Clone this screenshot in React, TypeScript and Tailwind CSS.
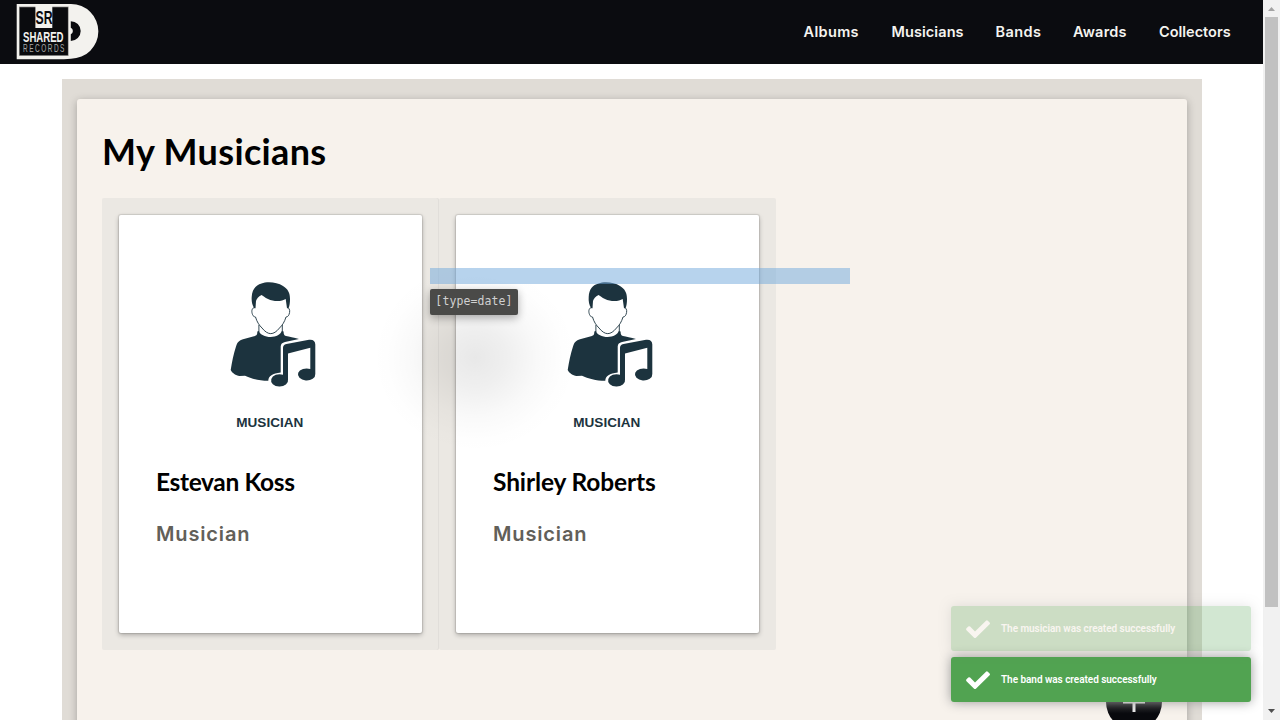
function Logo() {
  return (
    <svg width="83" height="56" viewBox="0 0 83 56" className="block">
      <path d="M.7 0H55A27.300 27.300 0 0 1 55 54.700L48 55.300H.7Z" fill="#f3f2ee" />
      <rect x="3" y="2.600" width="49.600" height="49.300" fill="#8e8e8c" />
      <rect x="3.700" y="3.300" width="48.200" height="47.900" fill="#0a0b0e" />
      <rect x="19.400" y="0" width="16.900" height="24" fill="#f3f2ee" />
      <path d="M54.800 17.200A9.900 9.900 0 0 1 54.800 37V30.200A3.500 3.500 0 0 0 54.800 23.800Z" fill="#0a0b0e" />
      <text x="19.600" y="20" textLength="17" lengthAdjust="spacingAndGlyphs" fontFamily="Liberation Sans" fontWeight="700" fontSize="19" fill="#0a0b0e">SR</text>
      <text x="7" y="37.800" textLength="40.500" lengthAdjust="spacingAndGlyphs" fontFamily="Liberation Sans" fontWeight="700" fontSize="15.500" fill="#f3f2ee">SHARED</text>
      <text transform="translate(7 48.400) scale(.6 1)" textLength="69" lengthAdjust="spacing" fontFamily="Liberation Sans" fontSize="10.800" fill="#a9a9a7">RECORDS</text>
    </svg>
  );
}

function MusicianArt() {
  return (
    <svg width="303" height="232" viewBox="0 0 303 232" className="block">
      <g fill="#1c333e">
        <path d="M135.300 93.300C133 90 132.400 86 132.700 82C133 74 137 70 142.500 68.500C148 66.500 158 67 164 71C169 74 171 78 171 84C171 88 170.500 91 169.500 93.300H168L166.700 84C163 86.500 155 87 149 84C146 82.500 144 81 142.500 80C139.500 81.500 137.500 84 137 86L136.500 93.300Z" />
        <path d="M138.300 116.500C138.300 119.500 138 120.500 135 121.200L124 124.300C120 125.600 118.500 127 117 131.500C114.500 139 113 147 111.700 155C113 158 117 160.500 120.500 161L126 160.700C132 163.500 140 165.800 149.300 165.800C149.500 161 153.500 158.300 161.700 157.500V131.500C162 128.800 163 127.800 166 127L180 124C175 122.500 170 121.600 167 121C165 120.500 164.600 119 164.600 116.500L162.800 116C162 119 157 122 151.700 122C146 122 141 119.500 139.800 116Z" />
        <path d="M164 134C164 130.500 165 129.600 167.500 129L190 124.800C194 124.300 196.300 126 196.300 129.500V159A8.700 6 0 1 1 191.300 154V132.700L169 138.500V164.500A8.500 6.200 0 1 1 164 159.700Z" />
      </g>
      <path d="M135 92.500C132.300 94 132.600 97 133.500 99.500C134.200 101.500 135.300 101.700 136.500 102C138 107 140 110 143 113C149 120.500 154.500 120.500 160.500 113C163.500 110 165.500 107 167 102C168.200 101.700 169.300 101.500 170 99.500C171 97 171.200 94 168.800 92.500M139.900 110V117.500M163.300 110V117.500" fill="none" stroke="#1c333e" strokeWidth=".9" />
      <text x="117.300" y="212" textLength="67" lengthAdjust="spacingAndGlyphs" fontFamily="Liberation Sans" fontWeight="700" fontSize="13.600" fill="#1c333e">MUSICIAN</text>
    </svg>
  );
}

function Card({ name, nameClass }: { name: string; nameClass: string }) {
  return (
    <div className="h-[452px] w-[337px] rounded-[2px] bg-[#ebe8e3] p-4 pt-[17px] shadow-[inset_-1px_0_0_#e1deda] last:shadow-none">
      <article className="ml-px h-[418px] w-[303px] rounded-[2px] bg-white shadow-[0_0_1px_1px_#0000001a,0_2px_5px_#00000045]">
        <MusicianArt />
        <div className="px-[37px] pt-[15px]">
          <h2 className={`h-10 whitespace-nowrap font-['Lato'] text-[24.500px] font-bold leading-10 text-black ${nameClass}`}>{name}</h2>
          <p className="mt-4 font-['Inter'] text-[20px] font-semibold leading-8 tracking-[0.850px] text-[#626059]">Musician</p>
        </div>
      </article>
    </div>
  );
}

function Toast({ text, className }: { text: string; className: string }) {
  return (
    <div className={`flex h-[45px] w-[300px] items-center rounded-[3px] bg-[#51a351] pl-[15px] shadow-[0_0_12px_#999999] ${className}`}>
      <svg width="24" height="24" viewBox="0 0 24 24">
        <path d="M.5 13.200Q-.3 12.200.5 11.300L2.300 9.500Q3.200 8.900 4.100 9.600L9 14.400 20 3.700Q20.900 3 21.800 3.700L23.600 5.400Q24.400 6.300 23.600 7.200L9.900 20.700Q9 21.500 8.100 20.700Z" fill="white" />
      </svg>
      <span className="ml-[11px] whitespace-nowrap font-['Roboto'] text-[10px] font-semibold tracking-[-0.040px] text-white">{text}</span>
    </div>
  );
}

export default function App() {
  return (
    <div className="relative flex h-[720px] w-[1280px] overflow-hidden bg-white">
      <div className="h-full w-[1263px] shrink-0">
        <header className="flex h-16 items-start justify-between bg-[#0b0c10] pl-4 pr-8 pt-1">
          <Logo />
          <nav className="flex h-14 gap-8 whitespace-nowrap font-['Inter'] text-[14.500px] font-semibold leading-[56px] text-[#f5f4f0]">
            <a className="w-14 tracking-[0.350px]">Albums</a>
            <a className="w-[72px] tracking-[0.080px]">Musicians</a>
            <a className="w-[45.500px] tracking-[0.400px]">Bands</a>
            <a className="w-[54px] tracking-[0.200px]">Awards</a>
            <a className="w-[72px]">Collectors</a>
          </nav>
        </header>
        <main className="ml-[62px] mt-[15px] h-[641px] w-[1140px] overflow-hidden bg-[#e0dcd6] px-[15px] pt-5">
          <section className="h-[700px] rounded-[3px] bg-[#f7f2ec] pl-[25px] pt-[29px] shadow-[0_2px_8px_#00000045]">
            <h1 className="h-[70px] whitespace-nowrap font-['Lato'] text-[36px] font-bold leading-[46px] tracking-[0.350px] text-black">My Musicians</h1>
            <div className="flex">
              <Card name="Estevan Koss" nameClass="tracking-[-0.350px]" />
              <Card name="Shirley Roberts" nameClass="tracking-[-0.130px]" />
            </div>
          </section>
        </main>
      </div>
      <aside className="flex h-full w-[17px] flex-col items-center justify-between bg-[#f1f1f1]">
        <svg width="17" height="17"><path d="M5 11H12L8.500 7Z" fill="#a3a3a3" /></svg>
        <div className="mb-auto h-[590px] w-[13px] bg-[#c1c1c1]" />
        <svg width="17" height="17"><path d="M5 6H12L8.500 10Z" fill="#505050" /></svg>
      </aside>

      <div className="absolute left-[370px] top-[260px] h-[195px] w-[210px] bg-[radial-gradient(closest-side,#00000017,#00000010_30%,#00000006_60%,#00000001_85%,transparent)]" />
      <div className="absolute left-[430px] top-[268px] h-4 w-[420px] bg-[#6fa8dc80]" />
      <div className="absolute left-[430px] top-[289px] flex h-[26px] w-[88px] items-center justify-center rounded-[2px] bg-[#4a4a48] font-['DejaVu_Sans_Mono'] text-[11.500px] tracking-[0.100px] text-[#d0d0d0] shadow-[0_3px_8px_#00000050]">[type=date]</div>
      <button className="absolute left-[1106px] top-[674px] flex size-14 items-center justify-center rounded-full bg-linear-to-b from-[#555] to-[#08090d] to-70%">
        <svg width="24" height="24" viewBox="0 0 24 24"><path d="M12 1V22M1 12H23" stroke="#e9e9e9" strokeWidth="3" /></svg>
      </button>
      <div className="absolute left-[951px] top-[606px] flex flex-col gap-1.5">
        <Toast text="The musician was created successfully" className="opacity-25" />
        <Toast text="The band was created successfully" className="" />
      </div>
    </div>
  );
}
